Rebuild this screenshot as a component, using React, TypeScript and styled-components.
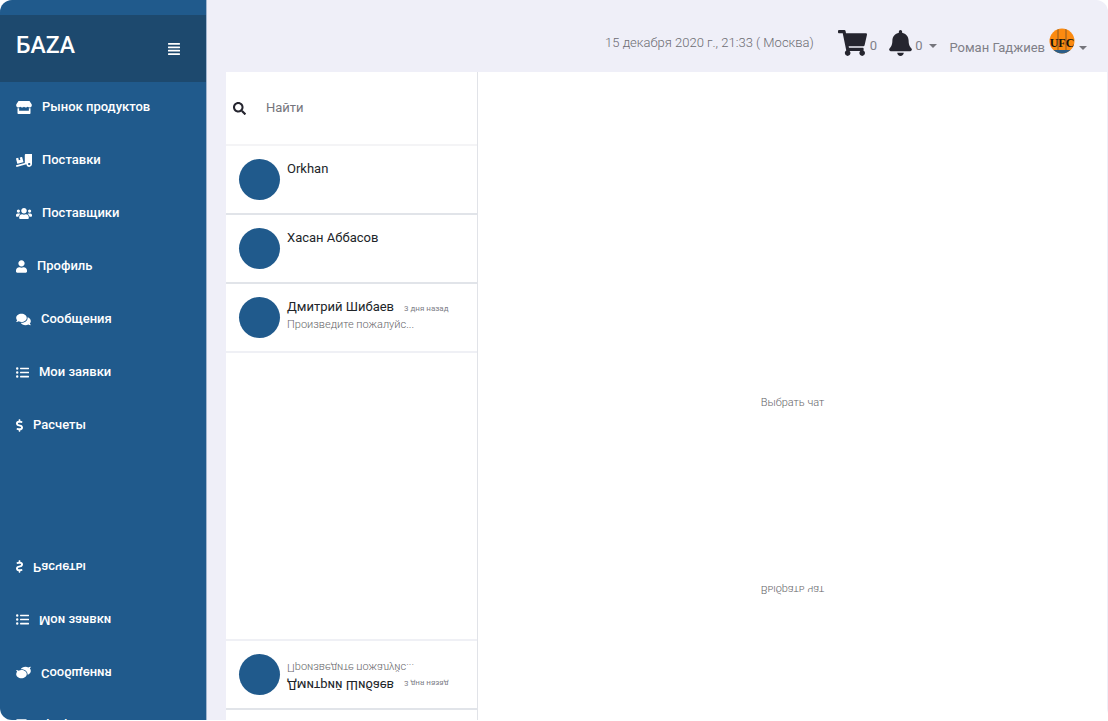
import React from "react";
import styled, { createGlobalStyle } from "styled-components";
import {
  FaAlignJustify,
  FaBell,
  FaComments,
  FaDollarSign,
  FaListUl,
  FaSearch,
  FaShoppingCart,
  FaStore,
  FaTruckLoading,
  FaUser,
  FaUsers,
} from "react-icons/fa";

const GlobalStyle = createGlobalStyle`
  * { box-sizing: border-box; }
  body {
    margin: 0;
    background: #fff;
    font-family: Roboto, "Liberation Sans", sans-serif;
    font-size: 13px;
    color: #212529;
  }
  button { font: inherit; color: inherit; border: 0; background: none; padding: 0; cursor: pointer; }
`;

const Frame = styled.div`
  display: flex;
  flex-direction: column;
  height: calc(100vh - 1px);
  overflow: hidden;
  border-radius: 12px;
`;

const Reflection = styled.div`
  flex: 1;
  min-height: 0;
  overflow: hidden;
`;

const Screen = styled.div<{ $flipped?: boolean }>`
  display: flex;
  flex-shrink: 0;
  background: #efeff8;
  transform: ${(p) => (p.$flipped ? "scaleY(-1)" : "none")};
`;

const Icon = styled.span<{ $width: number; $height?: number }>`
  display: flex;
  flex-shrink: 0;
  svg {
    width: ${(p) => p.$width}px;
    height: ${(p) => p.$height ?? 13}px;
  }
`;

const Sidebar = styled.aside`
  width: 207px;
  flex-shrink: 0;
  padding-top: 15px;
  background: #205a8c;
  border-right: 1px solid #a3b6cf;
  color: #fff;
`;

const Brand = styled.div`
  display: flex;
  justify-content: space-between;
  align-items: center;
  height: 67px;
  padding: 0 26px 6px 16px;
  background: #1d496e;
`;

const Logo = styled.a`
  color: #fff;
  text-decoration: none;
  font-size: 23px;
  line-height: 28px;
  font-weight: 500;
`;

const MenuButton = styled.button`
  display: flex;
  padding-top: 6px;
`;

const Nav = styled.nav`
  display: flex;
  flex-direction: column;
`;

const NavLink = styled.a`
  display: flex;
  align-items: center;
  gap: 10px;
  height: 53px;
  padding: 0 16px 3px;
  color: #fff;
  text-decoration: none;
  font-weight: 500;
  line-height: 20px;
`;

const Main = styled.main`
  flex: 1;
  min-width: 0;
  display: flex;
  flex-direction: column;
  padding: 0 1px 0 19px;
`;

const TopBar = styled.header`
  display: flex;
  justify-content: flex-end;
  align-items: flex-end;
  height: 72px;
  padding: 0 20px 16px 0;
  color: #808088;
`;

const Clock = styled.time`
  margin-right: 24px;
  line-height: 26px;
  font-weight: 300;
  color: #6c6c72;
`;

const Counter = styled.button`
  display: flex;
  align-items: flex-end;
  gap: 3px;
  margin-right: 12px;
  line-height: 20px;
  ${Icon} { color: #25252f; }
`;

const Caret = styled.span`
  margin: 0 0 8px 4px;
  border: 4px solid transparent;
  border-top-color: #75757c;
  border-bottom: 0;
`;

const Account = styled.button`
  display: flex;
  align-items: flex-end;
  gap: 4px;
  line-height: 16px;
  ${Caret} { margin: 0 0 6px; }
`;

const Avatar = styled.svg`
  width: 26px;
  height: 26px;
  margin-bottom: 2px;
`;

const Panel = styled.section`
  display: flex;
  flex: 1;
  background: #fff;
`;

const Contacts = styled.div`
  width: 252px;
  flex-shrink: 0;
  border-right: 1px solid #e1e3e8;
`;

const Search = styled.label`
  display: flex;
  align-items: center;
  gap: 20px;
  height: 74px;
  padding: 0 6px 0 7px;
  border-bottom: 2px solid #f4f4f6;
  ${Icon} { color: #25252f; }
`;

const SearchInput = styled.input`
  flex: 1;
  min-width: 0;
  padding: 0;
  border: 0;
  outline: 0;
  background: none;
  font: inherit;
  line-height: 20px;
  &::placeholder { color: #75757c; opacity: 1; }
`;

const ContactList = styled.ul`
  margin: 0;
  padding: 0;
  list-style: none;
`;

const Contact = styled.li`
  display: flex;
  gap: 7px;
  height: 69px;
  padding: 13px;
  border-bottom: 2px solid #e1e4e9;
  &:last-child { border-color: #eff0f5; }
`;

const Dot = styled.span`
  width: 41px;
  height: 41px;
  flex-shrink: 0;
  border-radius: 50%;
  background: #205a8c;
`;

const ContactLine = styled.div`
  display: flex;
  align-items: baseline;
  gap: 10px;
  line-height: 20px;
`;

const Ago = styled.time`
  font-size: 8px;
  color: #808088;
`;

const Snippet = styled.p`
  margin: 0;
  font-size: 11px;
  font-weight: 300;
  line-height: 12px;
  color: #66666a;
`;

const Chat = styled.div`
  flex: 1;
  padding: 323px 0 85px;
  text-align: center;
  font-size: 11px;
  font-weight: 300;
  line-height: 16px;
  color: #66666a;
`;

const navItems = [
  { label: "Рынок продуктов", Glyph: FaStore, width: 16 },
  { label: "Поставки", Glyph: FaTruckLoading, width: 16 },
  { label: "Поставщики", Glyph: FaUsers, width: 16 },
  { label: "Профиль", Glyph: FaUser, width: 11 },
  { label: "Сообщения", Glyph: FaComments, width: 15 },
  { label: "Мои заявки", Glyph: FaListUl, width: 13 },
  { label: "Расчеты", Glyph: FaDollarSign, width: 7 },
];

const contacts = [
  { name: "Orkhan" },
  { name: "Хасан Аббасов" },
  { name: "Дмитрий Шибаев", ago: "3 дня назад", snippet: "Произведите пожалуйс..." },
];

const avatarLetters = [
  { letter: "U", x: 5 },
  { letter: "F", x: 13 },
  { letter: "C", x: 21 },
];

function UserAvatar({ id }: { id: string }) {
  return (
    <Avatar viewBox="0 0 26 26" aria-hidden="true">
      <clipPath id={id}>
        <circle cx="13" cy="13" r="12.5" />
      </clipPath>
      <g clipPath={`url(#${id})`}>
        <rect width="26" height="26" fill="#fb8a10" />
        <rect y="22" width="26" height="4" fill="#2b5d88" />
        <path d="M9 0v22M17 0v22" stroke="#7d5426" strokeWidth="0.9" />
        {avatarLetters.map(({ letter, x }) => (
          <text
            key={letter}
            x={x}
            y="19"
            textAnchor="middle"
            fontFamily="Liberation Serif, serif"
            fontWeight="700"
            fontSize="12"
            fill="#17120c"
          >
            {letter}
          </text>
        ))}
      </g>
    </Avatar>
  );
}

function Messenger({ flipped = false }: { flipped?: boolean }) {
  return (
    <Screen $flipped={flipped} aria-hidden={flipped} inert={flipped}>
      <Sidebar>
        <Brand>
          <Logo href="#">БАZA</Logo>
          <MenuButton aria-label="Меню">
            <Icon $width={12} $height={14}>
              <FaAlignJustify />
            </Icon>
          </MenuButton>
        </Brand>
        <Nav>
          {navItems.map(({ label, Glyph, width }) => (
            <NavLink href="#" key={label}>
              <Icon $width={width}>
                <Glyph />
              </Icon>
              {label}
            </NavLink>
          ))}
        </Nav>
      </Sidebar>
      <Main>
        <TopBar>
          <Clock>15 декабря 2020 г., 21:33 ( Москва)</Clock>
          <Counter aria-label="Корзина">
            <Icon $width={29} $height={26}>
              <FaShoppingCart />
            </Icon>
            0
          </Counter>
          <Counter aria-label="Уведомления">
            <Icon $width={23} $height={26}>
              <FaBell />
            </Icon>
            0
            <Caret />
          </Counter>
          <Account>
            Роман Гаджиев
            <UserAvatar id={flipped ? "avatar-flipped" : "avatar"} />
            <Caret />
          </Account>
        </TopBar>
        <Panel>
          <Contacts>
            <Search>
              <Icon $width={13}>
                <FaSearch />
              </Icon>
              <SearchInput type="text" placeholder="Найти" aria-label="Найти" />
            </Search>
            <ContactList>
              {contacts.map((c) => (
                <Contact key={c.name}>
                  <Dot />
                  <div>
                    <ContactLine>
                      {c.name}
                      {c.ago && <Ago>{c.ago}</Ago>}
                    </ContactLine>
                    {c.snippet && <Snippet>{c.snippet}</Snippet>}
                  </div>
                </Contact>
              ))}
            </ContactList>
          </Contacts>
          <Chat>Выбрать чат</Chat>
        </Panel>
      </Main>
    </Screen>
  );
}

export default function App() {
  return (
    <>
      <GlobalStyle />
      <Frame>
        <Messenger />
        <Reflection>
          <Messenger flipped />
        </Reflection>
      </Frame>
    </>
  );
}
